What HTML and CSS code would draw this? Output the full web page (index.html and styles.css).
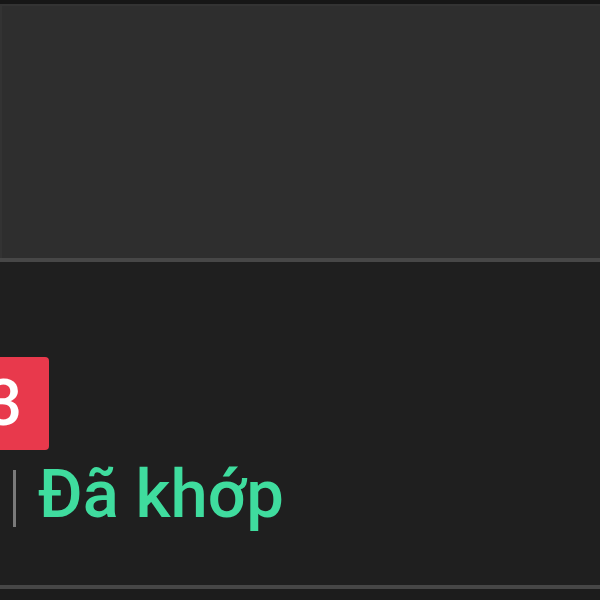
FILE: index.html
```html
<!DOCTYPE html>
<html lang="vi">
<head>
    <meta charset="UTF-8">
    <meta name="viewport" content="width=device-width, initial-scale=1.0">
    <title>Khớp lệnh</title>
    <link rel="stylesheet" href="styles.css">
</head>

<body>
    <div class="header-panel"></div>

    <div class="order-row">
        <div class="badge">3</div>
        <div class="status-line">
            <span class="divider"></span>
            <span class="status matched">Đã khớp</span>
        </div>
    </div>

    <div class="footer-strip"></div>
</body>
</html>
```

FILE: styles.css
```css
body {
    font-family: Roboto, 'Noto Sans', sans-serif;
    margin: 0;
    padding: 0;
    background-color: #1f1f1f;
    overflow: hidden;
}

.header-panel {
    height: 254px;
    background-color: #2e2e2e;
    border-top: 4px solid #161616;
    border-bottom: 4px solid #474747;
    box-shadow: inset 2px 2px 0 #333;
}

/* Order row with count badge and status */
.order-row {
    height: 228px;
    padding-top: 95px;
    background-color: #1f1f1f;
    border-bottom: 4px solid #464646;
}

.badge {
    width: 90px;
    height: 93px;
    margin-left: -41px;
    background-color: #e8394c;
    color: #fff;
    border-radius: 4px;
    font-size: 64px;
    font-weight: 500;
    line-height: 93px;
    text-align: center;
}

.status-line {
    display: flex;
    align-items: flex-start;
    margin-top: 11px;
}

.divider {
    width: 3px;
    height: 57px;
    margin-top: 9px;
    margin-left: 13px;
    margin-right: 22px;
    background-color: #7a7a7a;
}

.status {
    font-size: 67px;
    font-weight: 500;
    line-height: 67px;
}

.matched {
    color: #3fdc9e;
}

.footer-strip {
    height: 20px;
    background-color: #1c1c1c;
}
```
